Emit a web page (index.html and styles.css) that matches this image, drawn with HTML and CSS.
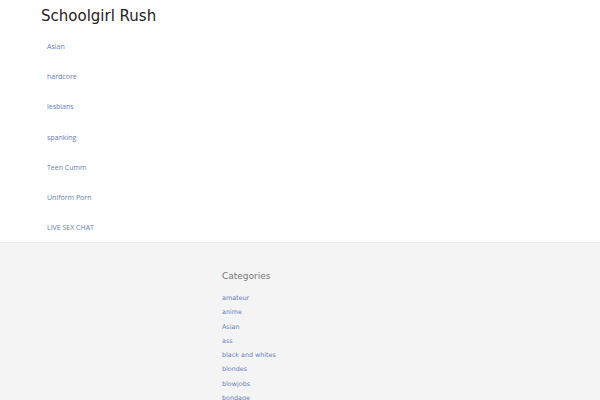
FILE: index.html
```html
<!DOCTYPE html>
<html>
<head>
<meta charset="utf-8">
<link rel="stylesheet" href="styles.css">
</head>
<body>
<header class="site-header">
  <h1 class="site-title">Schoolgirl Rush</h1>
  <nav class="main-nav">
    <a href="#">Asian</a>
    <a href="#">hardcore</a>
    <a href="#">lesbians</a>
    <a href="#">spanking</a>
    <a href="#">Teen Cumm</a>
    <a href="#">Uniform Porn</a>
    <a href="#">LIVE SEX CHAT</a>
  </nav>
</header>
<footer class="site-footer">
  <div class="widget">
    <h2 class="widget-title">Categories</h2>
    <ul class="cat-list">
      <li><a href="#">amateur</a></li>
      <li><a href="#">anime</a></li>
      <li><a href="#">Asian</a></li>
      <li><a href="#">ass</a></li>
      <li><a href="#">black and whites</a></li>
      <li><a href="#">blondes</a></li>
      <li><a href="#">blowjobs</a></li>
      <li><a href="#">bondage</a></li>
    </ul>
  </div>
</footer>
</body>
</html>
```
FILE: styles.css
```css
html, body {
  margin: 0;
  padding: 0;
  background: #fff;
}
body {
  font-family: "DejaVu Sans", sans-serif;
}
a { text-decoration: none; }
.site-header {
  padding: 6px 0 0 41px;
  height: 242px;
  box-sizing: border-box;
}
.site-title {
  margin: 0;
  font-size: 15px;
  font-weight: normal;
  color: #222;
  line-height: 20px;
}
.main-nav {
  display: flex;
  flex-direction: column;
  padding: 6px 0 0 6px;
}
.main-nav a {
  font-family: "Open Sans", "Liberation Sans", sans-serif;
  font-size: 7px;
  color: #6a7cbb;
  line-height: 30.2px;
  height: 30.2px;
}
.site-footer {
  background: #f4f4f4;
  border-top: 1px solid #ececec;
  padding: 26px 0 0 222px;
  height: 200px;
}
.widget-title {
  margin: 0 0 8px;
  font-size: 9px;
  font-weight: normal;
  color: #777;
  line-height: 14px;
}
.cat-list {
  list-style: none;
  margin: 0;
  padding: 0;
}
.cat-list li {
  line-height: 14.3px;
  font-size: 6.4px;
}
.cat-list a { color: #6a7ec0; }
```
